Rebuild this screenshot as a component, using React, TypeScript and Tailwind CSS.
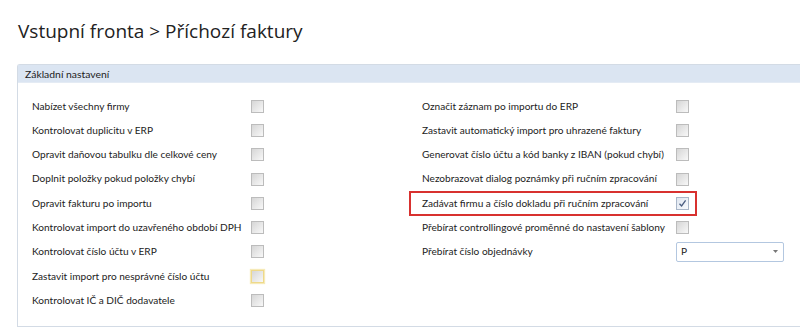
import React from "react";

const left = [
  "Nabízet všechny firmy",
  "Kontrolovat duplicitu v ERP",
  "Opravit daňovou tabulku dle celkové ceny",
  "Doplnit položky pokud položky chybí",
  "Opravit fakturu po importu",
  "Kontrolovat import do uzavřeného období DPH",
  "Kontrolovat číslo účtu v ERP",
  "Zastavit import pro nesprávné číslo účtu",
  "Kontrolovat IČ a DIČ dodavatele",
];

const right = [
  "Označit záznam po importu do ERP",
  "Zastavit automatický import pro uhrazené faktury",
  "Generovat číslo účtu a kód banky z IBAN (pokud chybí)",
  "Nezobrazovat dialog poznámky při ručním zpracování",
];

function Box({ focus, checked }: { focus?: boolean; checked?: boolean }) {
  if (checked) {
    return (
      <div className="w-[13px] h-[13px] border border-[#a9b6c8] bg-gradient-to-br from-[#dfe6f0] to-[#f8fafd] flex items-center justify-center">
        <svg width="9" height="9" viewBox="0 0 9 9">
          <path d="M1.5 4.8 L3.6 7 L7.6 1.4" fill="none" stroke="#4a5d80" strokeWidth="1.3" />
        </svg>
      </div>
    );
  }
  return (
    <div
      className={
        "w-[13px] h-[13px] border bg-gradient-to-br from-[#d6d6d6] to-[#f8f8f8] " +
        (focus ? "border-[#eed98a] shadow-[0_0_1px_1px_#f6eab8]" : "border-[#bcbcbc]")
      }
    />
  );
}

export default function App() {
  return (
    <div className="w-[800px] h-[330px] bg-white overflow-hidden text-[#2b2b2b]">
      <div
        className="pl-[18px] pt-[16px] h-[64px] text-[19px] leading-[30px] text-[#222]"
        style={{ fontFamily: '"Open Sans", "Noto Sans", sans-serif' }}
      >
        Vstupní fronta &gt; Příchozí faktury
      </div>
      <div
        className="ml-[17px] h-[263px] border-l border-t border-b border-[#d3dbe5] rounded-tl-[3px]"
        style={{ fontFamily: 'Lato, "Open Sans", sans-serif' }}
      >
        <div className="h-[18px] bg-[#dbe5f2] border-b border-[#e4ebf4] pl-[7px] text-[10.4px] leading-[18px] text-[#222]">
          Základní nastavení
        </div>
        <div className="flex pt-[11px] text-[10.1px] text-[#222]">
          <div className="pl-[14px] w-[391px]">
            {left.map((t, i) => (
              <div key={i} className="h-[24.3px] flex items-center">
                <div className="w-[219px] whitespace-nowrap">{t}</div>
                <Box focus={i === 7} />
              </div>
            ))}
          </div>
          <div className="pl-[13px]">
            {right.map((t, i) => (
              <div key={i} className="h-[24.3px] flex items-center">
                <div className="w-[254px] whitespace-nowrap">{t}</div>
                <Box />
              </div>
            ))}
            <div className="h-[24.3px] flex items-center relative">
              <div className="absolute left-[-13px] top-[-0.5px] w-[288px] h-[25px] border-2 border-[#d8312f]" />
              <div className="w-[254px] whitespace-nowrap">Zadávat firmu a číslo dokladu při ručním zpracování</div>
              <Box checked />
            </div>
            <div className="h-[24.3px] flex items-center">
              <div className="w-[254px] whitespace-nowrap">Přebírat controllingové proměnné do nastavení šablony</div>
              <Box />
            </div>
            <div className="h-[24.3px] flex items-center">
              <div className="w-[254px] whitespace-nowrap">Přebírat číslo objednávky</div>
              <div className="w-[108px] h-[20px] border border-[#b3c7e0] rounded-[2px] flex items-center justify-between pl-[4px] pr-[5px] text-[10.1px] text-[#222]">
                <span>P</span>
                <svg width="5" height="3" viewBox="0 0 5 3">
                  <path d="M0 0 L5 0 L2.5 3 Z" fill="#777" />
                </svg>
              </div>
            </div>
          </div>
        </div>
      </div>
    </div>
  );
}
